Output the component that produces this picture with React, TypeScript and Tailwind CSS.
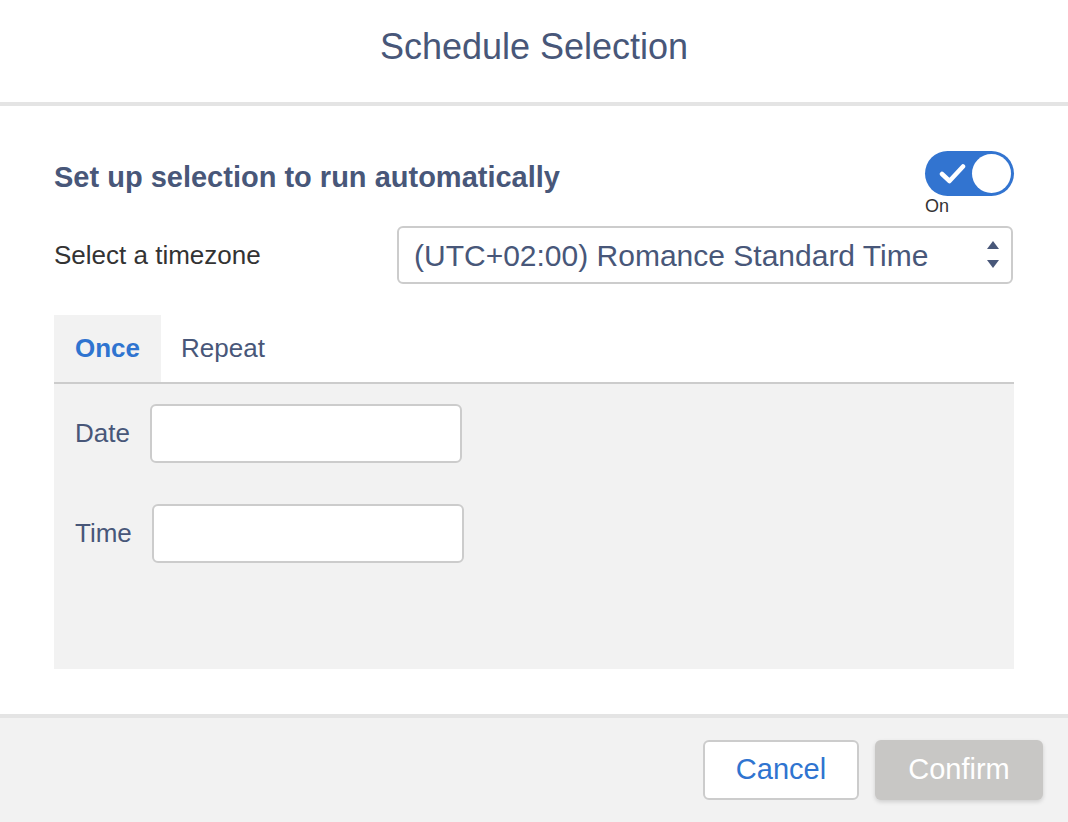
import React from "react";

export default function App() {
  return (
    <div
      className="w-[1068px] h-[822px] flex flex-col bg-white overflow-hidden"
      style={{ fontFamily: '"Liberation Sans", Arial, sans-serif' }}
    >
      {/* Header */}
      <div className="h-[106px] shrink-0 border-b-4 border-[#e4e4e4] flex justify-center pt-[29px]">
        <h1 className="text-[36px] leading-[36px] text-[#485779]">Schedule Selection</h1>
      </div>

      {/* Body */}
      <div className="flex-1 px-[54px] pt-[45px]">
        <div className="flex justify-between items-start h-[64px]">
          <div className="text-[29px] leading-[45px] mt-[4px] font-bold text-[#485779]">
            Set up selection to run automatically
          </div>
          <div className="flex flex-col items-start w-[89px]">
            <div className="w-[89px] h-[45px] rounded-full bg-[#3274d0] flex items-center justify-between pl-[14px] pr-[3px]">
              <svg width="27" height="21" viewBox="0 0 27 21" fill="none">
                <path d="M3 11 L10.5 18 L24 3.5" stroke="white" strokeWidth="4.5" strokeLinecap="round" strokeLinejoin="round" />
              </svg>
              <div className="w-[39px] h-[39px] rounded-full bg-white" />
            </div>
            <div className="text-[18px] leading-[20px] text-[#333333]">On</div>
          </div>
        </div>

        <div className="flex items-center mt-[11px]">
          <div className="w-[343px] text-[26px] text-[#333333]">Select a timezone</div>
          <div className="w-[616px] h-[58px] border-2 border-[#cccccc] rounded-[6px] bg-white flex items-center justify-between pl-[15px] pr-[12px]">
            <span className="text-[30px] text-[#485779] whitespace-nowrap">(UTC+02:00) Romance Standard Time</span>
            <svg width="12" height="28" viewBox="0 0 12 28">
              <polygon points="6,0 12,8 0,8" fill="#485779" />
              <polygon points="0,19 12,19 6,27" fill="#485779" />
            </svg>
          </div>
        </div>

        {/* Tabs */}
        <div className="mt-[31px] flex h-[69px] border-b-2 border-[#cccccc]">
          <div className="h-[67px] px-[21px] bg-[#f2f2f2] flex items-center text-[26px] font-bold text-[#2f74d0]">
            Once
          </div>
          <div className="h-[67px] px-[20px] flex items-center text-[26px] text-[#485779]">Repeat</div>
        </div>

        <div className="h-[285px] bg-[#f2f2f2] pt-[20px] px-[21px] flex flex-col gap-[41px]">
          <div className="flex items-center gap-[20px]">
            <span className="text-[26px] text-[#485779]">Date</span>
            <div className="w-[312px] h-[59px] bg-white border-2 border-[#cccccc] rounded-[6px]" />
          </div>
          <div className="flex items-center gap-[20px]">
            <span className="text-[26px] text-[#485779]">Time</span>
            <div className="w-[312px] h-[59px] bg-white border-2 border-[#cccccc] rounded-[6px]" />
          </div>
        </div>
      </div>

      {/* Footer */}
      <div className="h-[108px] shrink-0 border-t-4 border-[#e4e4e4] bg-[#f2f2f2] flex justify-end items-start pt-[22px] pr-[25px] gap-[16px]">
        <button className="w-[156px] h-[60px] bg-white border-2 border-[#cccccc] rounded-[6px] text-[29px] text-[#2f74d0] flex items-center justify-center">
          Cancel
        </button>
        <button className="w-[168px] h-[60px] bg-[#c8c7c5] rounded-[6px] text-[29px] text-white flex items-center justify-center shadow-[0_2px_4px_rgba(0,0,0,0.15)]">
          Confirm
        </button>
      </div>
    </div>
  );
}
